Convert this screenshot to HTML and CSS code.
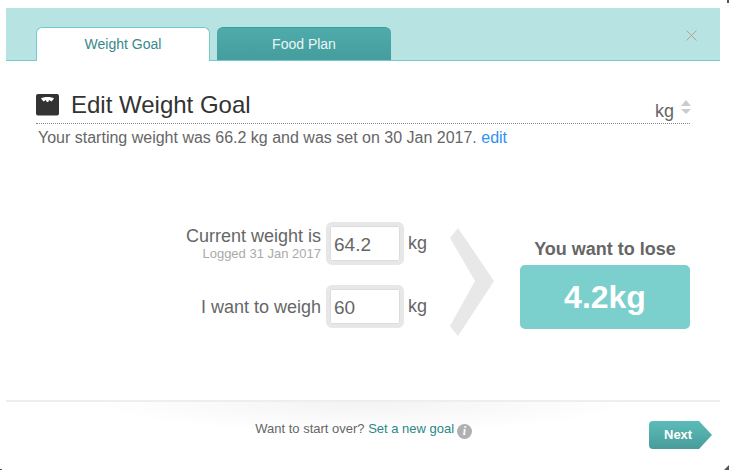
FILE: index.html
```html
<!DOCTYPE html>
<html lang="en">
<head>
<meta charset="utf-8">
<title>Edit Weight Goal</title>
<link rel="stylesheet" href="styles.css">
</head>
<body>
<div class="modal">
  <header class="tabbar">
    <div class="tab tab-active">Weight Goal</div>
    <div class="tab tab-idle">Food Plan</div>
    <svg class="close" width="11" height="11" viewBox="0 0 11 11"><path d="M.5.5l10 10M10.500.5l-10 10" stroke="#b39d9d" stroke-width="1" fill="none"/></svg>
  </header>
  <main class="content">
    <div class="title-row">
      <svg class="scale" width="23" height="22" viewBox="0 0 23 22"><rect x="0" y="0" width="23" height="21.500" rx="2" fill="#333"/><path d="M5 4.500C7 2.500 16 2.500 18 4.500L15.500 7.500 13 6 12.300 8H10.700L10 6 7.500 7.500Z" fill="#fff"/></svg>
      <h1 class="title">Edit Weight Goal</h1>
      <div class="unit-select">
        <span>kg</span>
        <svg class="stepper" width="10" height="15" viewBox="0 0 10 15"><path d="M5 0l5 6H0zM0 9h10l-5 5z" fill="#ccc"/></svg>
      </div>
    </div>
    <p class="summary">Your starting weight was 66.2 kg and was set on 30 Jan 2017. <a class="edit">edit</a></p>
    <div class="calc">
      <div class="fields">
        <div class="field">
          <div class="label">
            <span>Current weight is</span>
            <small>Logged 31 Jan 2017</small>
          </div>
          <div class="input">64.2</div>
          <span class="unit">kg</span>
        </div>
        <div class="field">
          <div class="label"><span>I want to weigh</span></div>
          <div class="input">60</div>
          <span class="unit">kg</span>
        </div>
      </div>
      <svg class="chevron" width="44" height="108" viewBox="0 0 44 108"><path d="M0 10L8 0 44 53 8 108 0 98 25 53Z" fill="#e8e8e8"/></svg>
      <div class="result">
        <div class="result-label">You want to lose</div>
        <div class="result-box">4.2kg</div>
      </div>
    </div>
  </main>
  <footer class="footer">
    <div class="restart">Want to start over? <a class="link">Set a new goal</a> <span class="info">i</span></div>
    <div class="next">Next</div>
  </footer>
</div>
<i class="corner corner-tr"></i>
<i class="corner corner-br"></i>
<i class="corner corner-bl"></i>
</body>
</html>
```
FILE: styles.css
```css
* { box-sizing: border-box; }
html, body { margin: 0; height: 100%; }
body { background: #fff; padding: 8px 9px 0 6px; font-family: "Liberation Sans", Arial, sans-serif; color: #666; overflow: hidden; position: relative; }
.modal { width: 714px; height: 462px; display: flex; flex-direction: column; }
.tabbar { height: 53px; flex: none; background: #b7e3e3; border-bottom: 1px solid #74cbc9; padding: 19px 0 0 30px; display: flex; gap: 7px; position: relative; }
.tab { width: 174px; height: 34px; border-radius: 6px 6px 0 0; font-size: 14px; line-height: 34px; text-align: center; }
.tab-active { background: #fff; color: #38898a; border: 1px solid #74cbc9; border-bottom: 0; height: 34px; line-height: 32px; }
.tab-idle { background: linear-gradient(#4fabab, #459d9d); color: #e8f6f6; border-top: 1px solid #3f9a9a; line-height: 32px; height: 33px; }
.close { position: absolute; right: 23px; top: 22px; }
.content { flex: 1; padding: 0 30px; }
.title-row { height: 40px; margin-top: 23px; border-bottom: 1px dotted #888; display: flex; align-items: flex-start; padding-top: 8px; }
.scale { flex: none; margin-top: 2px; }
.title { margin: 0 0 0 12px; font-size: 24px; font-weight: 400; color: #333; line-height: 26px; }
.unit-select { margin-left: auto; display: flex; align-items: flex-start; gap: 7px; font-size: 18px; color: #666; padding-top: 9px; margin-right: -1px; line-height: 20px; }
.stepper { margin-top: -1px; }
.summary { margin: 4px 0 0 2px; font-size: 16px; line-height: 20px; color: #666; }
.edit { color: #2e93ef; }
.calc { display: flex; margin-top: 68px; align-items: flex-start; }
.fields { width: 398px; padding-top: 6px; display: flex; flex-direction: column; gap: 20px; }
.field { display: flex; align-items: center; height: 43px; }
.label { width: 285px; text-align: right; display: flex; flex-direction: column; color: #666; font-size: 18px; line-height: 20px; }
.label small { font-size: 13px; line-height: 15px; color: #aaa; }
.input { width: 78px; height: 43px; margin-left: 5px; border: 4px solid #e7e7e7; border-radius: 6px; box-shadow: inset 0 0 0 1px #dcdcdc; background: #fff; font-size: 19px; line-height: 37px; padding-left: 4px; color: #666; }
.unit { margin-left: 4px; font-size: 18px; color: #666; }
.chevron { flex: none; margin: 12px 0 0 16px; }
.result { margin-left: 26px; width: 170px; text-align: center; padding-top: 23px; }
.result-label { font-size: 18px; font-weight: 700; color: #666; line-height: 20px; }
.result-box { margin-top: 6px; height: 64px; border-radius: 5px; background: #7bd0cd; color: #fff; font-size: 32px; font-weight: 700; line-height: 64px; }
.footer { height: 71px; flex: none; margin-bottom: -1px; border-top: 2px solid #eee; position: relative; background: radial-gradient(ellipse 270px 30px at 50% 0, #f3f3f3, #fff); }
.restart { text-align: center; padding: 19px 0 0 0; margin-left: 1px; font-size: 13px; line-height: 16px; color: #666; }
.link { color: #2b8785; }
.info { display: inline-block; width: 15px; height: 15px; border-radius: 50%; background: #b0b0b0; color: #fff; font: italic 700 12px/15px "Liberation Serif", serif; text-align: center; vertical-align: -2px; margin-left: -1px; }
.next { position: absolute; left: 643px; top: 19px; width: 63px; height: 28px; background: linear-gradient(#5bbcb9, #489c9a); color: #fff; font-size: 13px; font-weight: 700; line-height: 28px; padding-left: 15px; border-radius: 4px 0 0 4px; clip-path: polygon(0 0, 50px 0, 63px 14px, 50px 28px, 0 28px); }
.corner { position: absolute; background: #555; }
.corner-tr { right: 0; top: 0; width: 2px; height: 3px; }
.corner-br { right: 0; bottom: 0; width: 5px; height: 5px; clip-path: polygon(100% 0, 100% 100%, 0 100%); }
.corner-bl { left: 0; bottom: 0; width: 2px; height: 1px; }
```
